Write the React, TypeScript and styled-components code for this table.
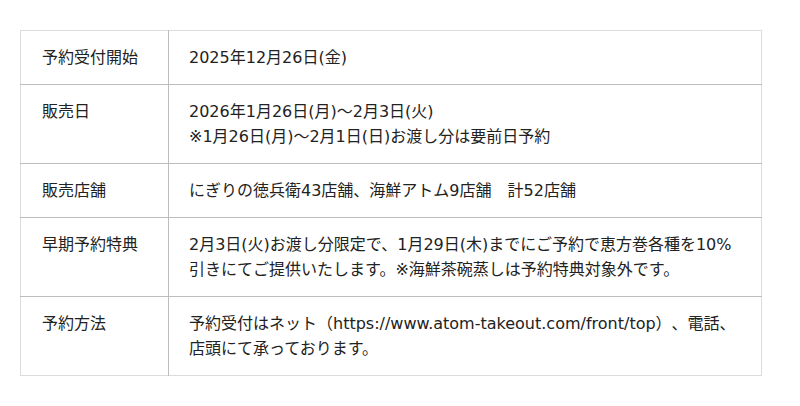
import React from "react";
import styled, { createGlobalStyle } from "styled-components";

const GlobalStyle = createGlobalStyle`
  html, body {
    margin: 0;
    padding: 0;
    background: #ffffff;
  }
  body {
    font-family: "DejaVu Sans", "Noto Sans CJK JP", sans-serif;
    color: #222222;
    text-spacing-trim: space-all;
  }
`;

const Page = styled.div`
  padding: 30px 0 0 20px;
`;

const Table = styled.table`
  width: 742px;
  border-collapse: collapse;
  border: 1px solid #dcdcdc;
  font-size: 16px;
  line-height: 25px;
`;

const Row = styled.tr`
  & + & > * {
    border-top: 1px solid #bdbdbd;
  }
`;

const Label = styled.th`
  width: 148px;
  box-sizing: border-box;
  padding: 14px 20px 14px 21px;
  text-align: left;
  vertical-align: top;
  font-weight: normal;
  border-right: 1px solid #bdbdbd;
  white-space: nowrap;
`;

const Value = styled.td`
  padding: 14px 20px 14px 20px;
  text-align: left;
  vertical-align: top;
  white-space: nowrap;
`;

const Line = styled.span`
  display: block;
  text-spacing-trim: space-all;
`;

type Item = { label: string; lines: string[] };

const items: Item[] = [
  { label: "予約受付開始", lines: ["2025年12月26日(金)"] },
  {
    label: "販売日",
    lines: ["2026年1月26日(月)〜2月3日(火)", "※1月26日(月)〜2月1日(日)お渡し分は要前日予約"],
  },
  { label: "販売店舗", lines: ["にぎりの徳兵衛43店舗、海鮮アトム9店舗　計52店舗"] },
  {
    label: "早期予約特典",
    lines: [
      "2月3日(火)お渡し分限定で、1月29日(木)までにご予約で恵方巻各種を10%",
      "引きにてご提供いたします。※海鮮茶碗蒸しは予約特典対象外です。",
    ],
  },
  {
    label: "予約方法",
    lines: ["予約受付はネット（https://www.atom-takeout.com/front/top）、電話、", "店頭にて承っております。"],
  },
];

export default function App() {
  return (
    <>
      <GlobalStyle />
      <Page>
        <Table>
          <tbody>
            {items.map((it) => (
              <Row key={it.label}>
                <Label>{it.label}</Label>
                <Value>
                  {it.lines.map((l, i) => (
                    <Line key={i}>{l}</Line>
                  ))}
                </Value>
              </Row>
            ))}
          </tbody>
        </Table>
      </Page>
    </>
  );
}
